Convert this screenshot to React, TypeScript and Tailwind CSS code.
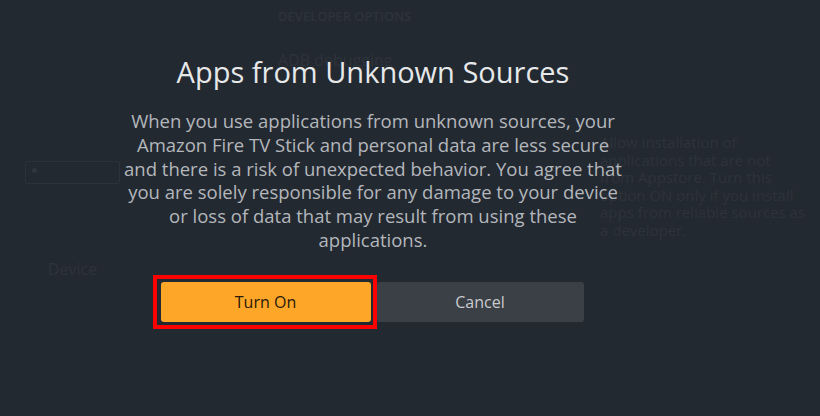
import React from "react";

const bodyLines = [
  "When you use applications from unknown sources, your",
  "Amazon Fire TV Stick and personal data are less secure",
  "and there is a risk of unexpected behavior. You agree that",
  "you are solely responsible for any damage to your device",
  "or loss of data that may result from using these",
  "applications.",
];

const helpLines = [
  "Allow installation of",
  "applications that are not",
  "from Appstore. Turn this",
  "option ON only if you install",
  "apps from reliable sources as",
  "a developer.",
];

function SettingsBehind() {
  return (
    <div className="flex h-[416px] w-full text-[#2d333b]">
      {/* left menu column */}
      <div className="w-[278px] shrink-0 pl-[25px] pt-[161px]">
        <div className="relative h-[23px] w-[95px] rounded-[2px] border border-[#2c323a]">
          <span className="absolute left-[6px] top-[6px] h-[5px] w-[5px] rounded-full bg-[#30363f]" />
        </div>
        <div className="mt-[75px] w-[95px] text-center text-[16px] leading-[20px]">Device</div>
      </div>

      {/* middle options column */}
      <div className="w-[322px] shrink-0 pt-[7px]">
        <div className="text-[13px] font-semibold uppercase leading-[18px]">Developer Options</div>
        <div className="mt-[25px] text-[16px] leading-[20px]">ADB debugging</div>
      </div>

      {/* right description column */}
      <div className="flex-1 pt-[134px] text-[15px] leading-[17.6px]">
        {helpLines.map((l) => (
          <div key={l}>{l}</div>
        ))}
      </div>
    </div>
  );
}

export default function App() {
  return (
    <div
      className="relative h-[416px] w-[820px] overflow-hidden bg-[#232931]"
      style={{ fontFamily: '"Open Sans", "Noto Sans", sans-serif' }}
    >
      <SettingsBehind />

      {/* dialog overlay */}
      <div className="absolute inset-0 flex flex-col items-center pr-[74px] pt-[52px]">
        <h1 className="text-[29px] leading-[40px] text-[#e6e8ea]">Apps from Unknown Sources</h1>
        <p className="mt-[17px] text-center text-[18.5px] leading-[23.8px] text-[#b3b7bc]">
          {bodyLines.map((l) => (
            <span key={l} className="block">
              {l}
            </span>
          ))}
        </p>

        <div className="mr-[10px] mt-[23px] flex items-center">
          <div className="border-4 border-[#ff0000] py-[3px] pl-[4px] pr-[2px]">
            <button className="h-[40px] w-[210px] rounded-[3px] bg-[#fea628] text-[16px] font-medium text-[#2a1a08]">
              Turn On
            </button>
          </div>
          <button className="h-[40px] w-[207px] rounded-[3px] bg-[#3b3f46] text-[16px] text-[#c9cbce]">
            Cancel
          </button>
        </div>
      </div>
    </div>
  );
}
